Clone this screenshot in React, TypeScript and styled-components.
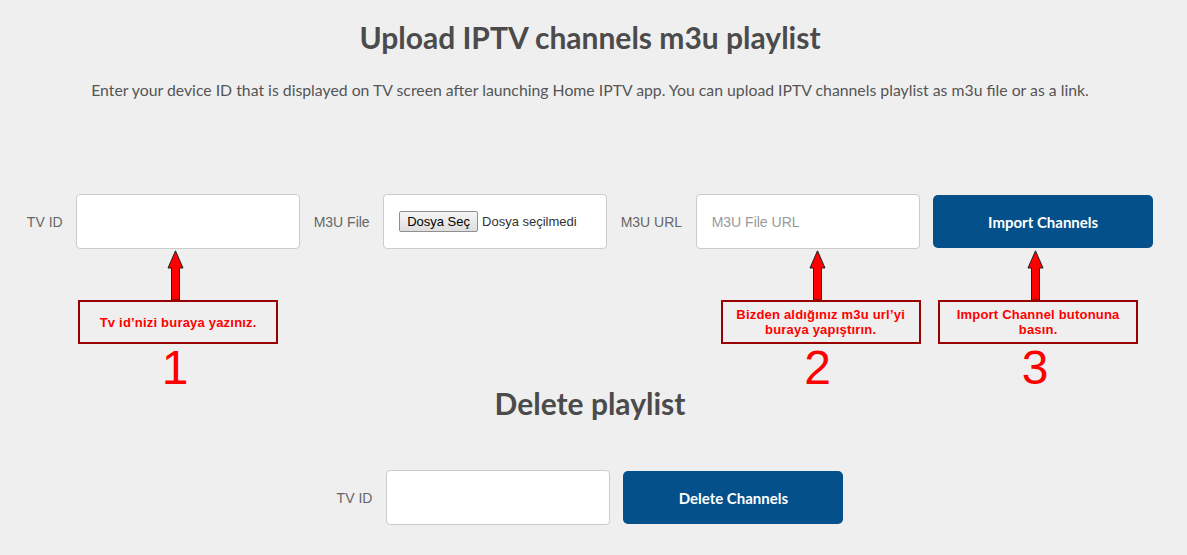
import React from 'react';
import styled, { createGlobalStyle } from 'styled-components';

const GlobalStyle = createGlobalStyle`
  body {
    margin: 0;
    background-color: #efefef;
    font-family: 'Lato', 'Liberation Sans', sans-serif;
  }
`;

const Page = styled.div`
  width: 1180px;
  padding-top: 17px;
  padding-bottom: 30px;
`;

const Heading = styled.h1<{ $top?: number }>`
  margin: ${(p) => p.$top ?? 0}px 0 0;
  font-family: 'Lato', sans-serif;
  font-weight: 700;
  font-size: 30px;
  line-height: 40px;
  color: #4b4b4b;
  text-align: center;
`;

const Description = styled.p`
  margin: 21px 0 0;
  font-family: 'Lato', sans-serif;
  font-size: 15.8px;
  line-height: 24px;
  color: #555;
  text-align: center;
`;

const FormRow = styled.div<{ $top: number }>`
  display: flex;
  justify-content: center;
  align-items: center;
  gap: 13.5px;
  margin-top: ${(p) => p.$top}px;
`;

const Label = styled.label`
  font-family: 'Liberation Sans', Arial, sans-serif;
  font-size: 14px;
  color: #666;
`;

const Field = styled.div`
  position: relative;
  display: flex;
`;

const TextInput = styled.input`
  box-sizing: border-box;
  width: 224px;
  height: 55px;
  padding: 0 15px;
  border: 1px solid #ccc;
  border-radius: 4px;
  background: #fff;
  font-family: 'Liberation Sans', Arial, sans-serif;
  font-size: 14px;
  color: #333;
  outline: none;

  &::placeholder {
    color: #999;
  }
`;

const FileBox = styled.div`
  box-sizing: border-box;
  width: 224px;
  height: 55px;
  padding: 0 15px;
  display: flex;
  align-items: center;
  gap: 4px;
  border: 1px solid #ccc;
  border-radius: 4px;
  background: #fff;
  font-family: 'Liberation Sans', Arial, sans-serif;
  font-size: 13px;
  color: #333;
`;

const FileButton = styled.span`
  box-sizing: border-box;
  height: 21px;
  padding: 0 7px;
  display: flex;
  align-items: center;
  border: 1px solid #8f8f8f;
  border-radius: 2px;
  background: linear-gradient(#f6f6f6, #dedede);
  color: #000;
`;

const PrimaryButton = styled.button`
  width: 220px;
  height: 53px;
  border: none;
  border-radius: 5px;
  background-color: #04508a;
  color: #fff;
  font-family: 'Lato', sans-serif;
  font-weight: 700;
  font-size: 15px;
  cursor: pointer;
`;

const Annotation = styled.div<{ $left: number; $top: number }>`
  position: absolute;
  left: ${(p) => p.$left}px;
  top: calc(100% + ${(p) => p.$top}px);
  width: 200px;
  display: flex;
  flex-direction: column;
  align-items: center;
`;

const NoteBox = styled.div`
  box-sizing: border-box;
  width: 200px;
  height: 44px;
  margin-left: 6px;
  padding: 0 8px;
  display: flex;
  align-items: center;
  justify-content: center;
  border: 2px solid #990000;
  font-family: 'Liberation Sans', Arial, sans-serif;
  font-weight: 700;
  font-size: 13px;
  line-height: 15px;
  letter-spacing: 0.2px;
  color: #ff0000;
  text-align: center;
`;

const StepNumber = styled.div`
  font-family: 'Liberation Sans', Arial, sans-serif;
  font-size: 48px;
  line-height: 48px;
  color: #ff0000;
`;

const UpArrow = () => (
  <svg width="17" height="50" viewBox="0 0 17 50">
    <path
      d="M8.5 0.8 L16 18 L12.5 18 L12.5 50 L4.5 50 L4.5 18 L1 18 Z"
      fill="#ff0000"
      stroke="#222"
      strokeWidth="1"
      strokeLinejoin="round"
    />
  </svg>
);

const Note: React.FC<{ left: number; top: number; step: number; children: React.ReactNode }> = ({
  left,
  top,
  step,
  children,
}) => (
  <Annotation $left={left} $top={top}>
    <UpArrow />
    <NoteBox>{children}</NoteBox>
    <StepNumber>{step}</StepNumber>
  </Annotation>
);

const App: React.FC = () => {
  return (
    <Page>
      <GlobalStyle />
      <Heading>Upload IPTV channels m3u playlist</Heading>
      <Description>
        Enter your device ID that is displayed on TV screen after launching Home IPTV app. You can upload IPTV
        channels playlist as m3u file or as a link.
      </Description>

      <FormRow $top={92}>
        <Label>TV ID</Label>
        <Field>
          <TextInput type="text" />
          <Note left={-1} top={1} step={1}>
            Tv id’nizi buraya yazınız.
          </Note>
        </Field>
        <Label>M3U File</Label>
        <Field>
          <FileBox>
            <FileButton>Dosya Seç</FileButton>
            <span>Dosya seçilmedi</span>
          </FileBox>
        </Field>
        <Label>M3U URL</Label>
        <Field>
          <TextInput type="text" placeholder="M3U File URL" />
          <Note left={22} top={1} step={2}>
            Bizden aldığınız m3u url’yi buraya yapıştırın.
          </Note>
        </Field>
        <Field>
          <PrimaryButton>Import Channels</PrimaryButton>
          <Note left={2} top={2} step={3}>
            Import Channel butonuna basın.
          </Note>
        </Field>
      </FormRow>

      <Heading $top={134}>Delete playlist</Heading>

      <FormRow $top={47}>
        <Label>TV ID</Label>
        <Field>
          <TextInput type="text" />
        </Field>
        <Field>
          <PrimaryButton>Delete Channels</PrimaryButton>
        </Field>
      </FormRow>
    </Page>
  );
};

export default App;
